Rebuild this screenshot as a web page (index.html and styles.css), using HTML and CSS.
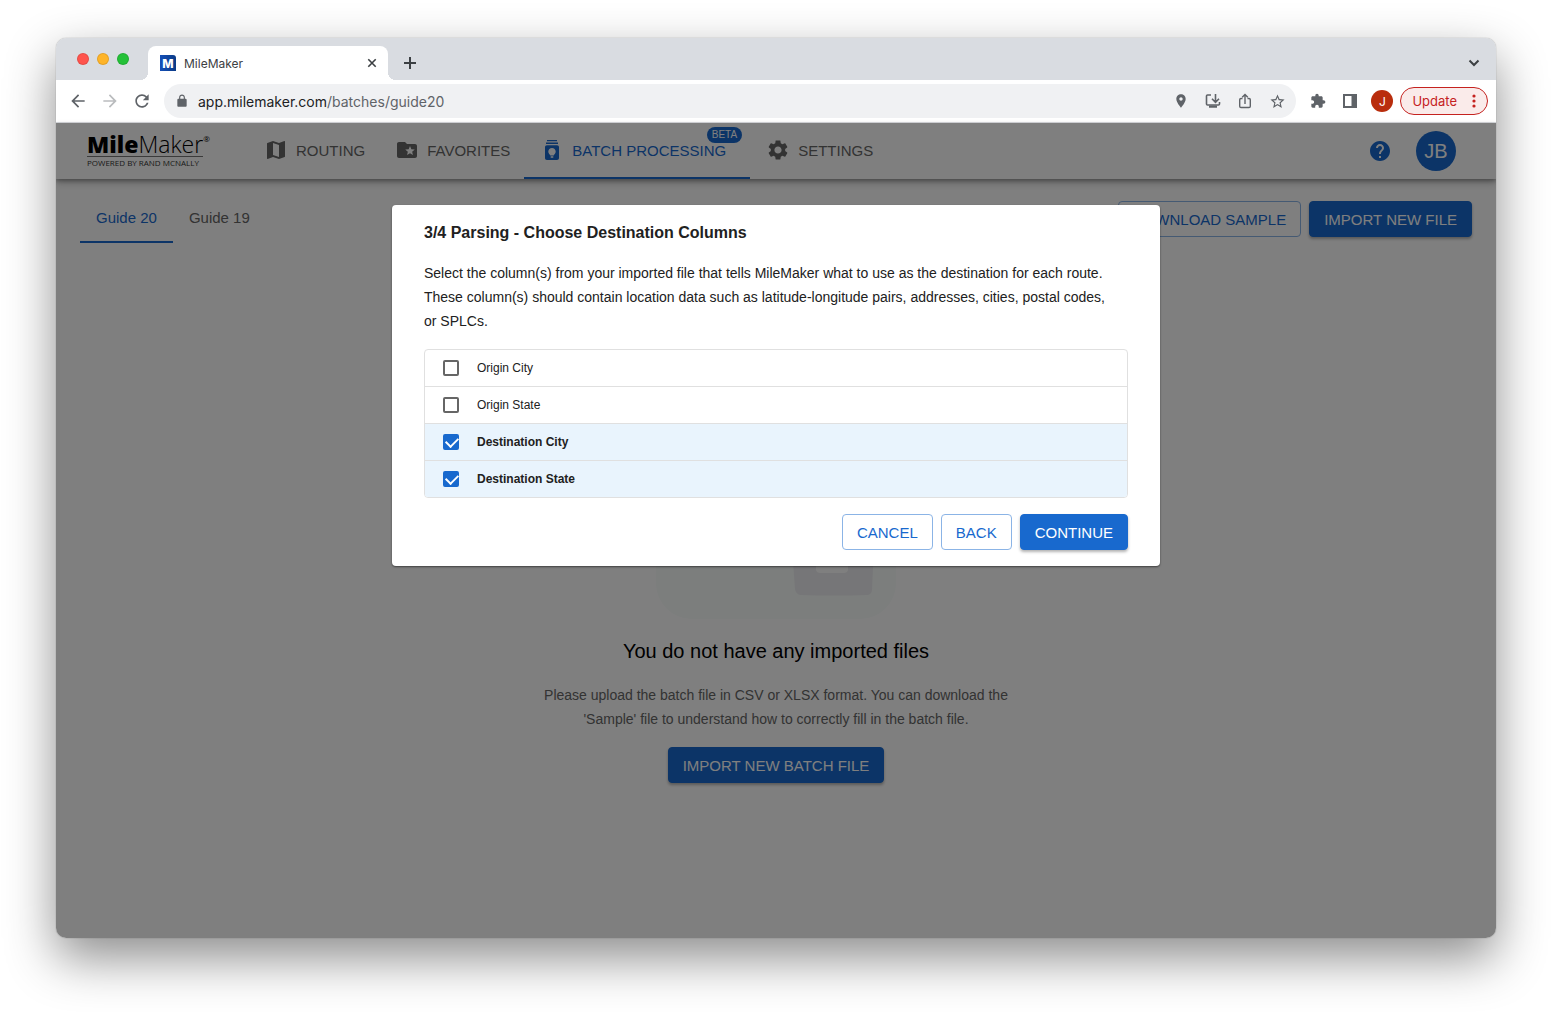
FILE: index.html
```html
<!DOCTYPE html>
<html lang="en">
<head>
<meta charset="UTF-8">
<meta name="viewport" content="width=device-width, initial-scale=1.0">
<title>MileMaker</title>
<link rel="stylesheet" href="styles.css">
</head>
<body>
  <div class="window">
    <!-- Browser tabs -->
    <div class="tab-strip">
      <div class="lights">
        <span class="light red"></span>
        <span class="light yellow"></span>
        <span class="light green"></span>
      </div>
      <div class="browser-tab">
        <span class="favicon">M</span>
        <span class="tab-title">MileMaker</span>
        <button class="icon-button" aria-label="Close tab">
          <svg width="16" height="16" viewBox="0 0 16 16" fill="none" stroke="#3c4043" stroke-width="1.6"><path d="M4.300 4.300l7.400 7.400M11.700 4.300l-7.400 7.400"/></svg>
        </button>
      </div>
      <button class="icon-button new-tab" aria-label="New tab">
        <svg width="16" height="16" viewBox="0 0 16 16" fill="none" stroke="#3c4043" stroke-width="2"><path d="M8 2v12M2 8h12"/></svg>
      </button>
      <button class="icon-button tab-search" aria-label="Search tabs">
        <svg width="16" height="16" viewBox="0 0 16 16" fill="none" stroke="#3c4043" stroke-width="2"><path d="M3.500 5.500L8 10l4.500-4.500"/></svg>
      </button>
    </div>

    <!-- Address bar -->
    <div class="toolbar">
      <button class="icon-button" aria-label="Back">
        <svg width="20" height="20" viewBox="0 0 24 24" fill="#5f6368"><path d="M20 11H7.830l5.590-5.590L12 4l-8 8 8 8 1.410-1.410L7.830 13H20v-2z"/></svg>
      </button>
      <button class="icon-button" aria-label="Forward">
        <svg width="20" height="20" viewBox="0 0 24 24" fill="#babcbe"><path d="M12 4l-1.410 1.410L16.170 11H4v2h12.170l-5.580 5.590L12 20l8-8z"/></svg>
      </button>
      <button class="icon-button" aria-label="Reload">
        <svg width="20" height="20" viewBox="0 0 24 24" fill="#5f6368"><path d="M17.650 6.350C16.200 4.900 14.210 4 12 4c-4.420 0-7.990 3.580-7.990 8s3.570 8 7.990 8c3.730 0 6.840-2.550 7.730-6h-2.080c-.82 2.330-3.040 4-5.650 4-3.310 0-6-2.690-6-6s2.690-6 6-6c1.660 0 3.140.69 4.220 1.780L13 11h7V4l-2.350 2.350z"/></svg>
      </button>
      <div class="omnibox">
        <svg width="14" height="14" viewBox="0 0 24 24" fill="#5f6368"><path d="M18 8h-1V6c0-2.760-2.240-5-5-5S7 3.240 7 6v2H6c-1.100 0-2 .9-2 2v10c0 1.100.9 2 2 2h12c1.100 0 2-.9 2-2V10c0-1.100-.9-2-2-2zM9 6c0-1.660 1.340-3 3-3s3 1.340 3 3v2H9V6z"/></svg>
        <span class="url">app.milemaker.com<span class="url-path">/batches/guide20</span></span>
        <svg width="16" height="16" viewBox="0 0 24 24" fill="#5f6368"><path d="M12 2C8.130 2 5 5.130 5 9c0 5.250 7 13 7 13s7-7.750 7-13c0-3.870-3.130-7-7-7zm0 9.500c-1.380 0-2.500-1.120-2.500-2.500s1.120-2.500 2.500-2.500 2.500 1.120 2.500 2.500-1.120 2.500-2.500 2.500z"/></svg>
        <svg width="16" height="16" viewBox="0 0 16 16" fill="none" stroke="#5f6368" stroke-width="1.600"><path d="M6 2H2.500C1.800 2 1.500 2.300 1.500 3v8c0 .7.300 1 1 1h11c.7 0 1-.3 1-1V9M10.500 1v8M7 5.800l3.500 3.500L14 5.800"/><path d="M4 13.600h8" stroke-width="2.400"/></svg>
        <svg width="16" height="16" viewBox="0 0 16 16" fill="none" stroke="#5f6368" stroke-width="1.400"><path d="M5.500 5.500H4c-.9 0-1.300.4-1.300 1.300v6.400c0 .9.400 1.300 1.300 1.300h8c.9 0 1.300-.4 1.300-1.300V6.800c0-.9-.4-1.300-1.300-1.300h-1.500M8 11V2M5.200 4.300L8 1.500l2.800 2.800"/></svg>
        <svg width="17" height="17" viewBox="0 0 24 24" fill="#5f6368"><path d="M22 9.240l-7.190-.62L12 2 9.190 8.630 2 9.240l5.460 4.730L5.820 21 12 17.270 18.180 21l-1.630-7.030L22 9.240zM12 15.400l-3.760 2.270 1-4.280-3.320-2.880 4.380-.38L12 6.100l1.710 4.040 4.380.38-3.320 2.880 1 4.280L12 15.400z"/></svg>
      </div>
      <button class="icon-button" aria-label="Extensions">
        <svg width="16" height="16" viewBox="0 0 24 24" fill="#5f6368"><path d="M20.500 11H19V7c0-1.100-.9-2-2-2h-4V3.500C13 2.120 11.880 1 10.500 1S8 2.120 8 3.500V5H4c-1.100 0-1.990.9-1.990 2v3.800H3.500c1.490 0 2.700 1.210 2.700 2.700s-1.210 2.700-2.700 2.700H2V20c0 1.100.9 2 2 2h3.800v-1.500c0-1.490 1.210-2.700 2.700-2.700 1.490 0 2.700 1.210 2.700 2.700V22H17c1.100 0 2-.9 2-2v-4h1.500c1.380 0 2.500-1.120 2.500-2.500S21.880 11 20.500 11z"/></svg>
      </button>
      <button class="icon-button" aria-label="Side panel">
        <svg width="16" height="16" viewBox="0 0 16 16" fill="#5f6368"><path d="M1 1h14v14H1zM3 3v10h6.500V3z" fill-rule="evenodd"/></svg>
      </button>
      <button class="profile" aria-label="Profile">J</button>
      <button class="update">Update
        <svg width="4" height="16" viewBox="0 0 4 16" fill="#c5221f"><circle cx="2" cy="3" r="1.600"/><circle cx="2" cy="8" r="1.600"/><circle cx="2" cy="13" r="1.600"/></svg>
      </button>
    </div>

    <div class="app">
      <header class="app-bar">
        <a class="logo" href="#">
          <span class="logo-name"><b>Mile</b>Maker<sup>®</sup></span>
          <span class="logo-sub">POWERED BY RAND MCNALLY</span>
        </a>
        <nav class="nav">
          <a class="nav-link" href="#">
            <svg width="24" height="24" viewBox="0 0 24 24"><path d="M20.500 3l-.16.03L15 5.100 9 3 3.360 4.900c-.21.07-.36.25-.36.48V20.500c0 .28.220.5.500.5l.16-.03L9 18.900l6 2.100 5.640-1.900c.21-.07.360-.25.360-.48V3.500c0-.28-.22-.5-.5-.5zM15 19l-6-2.110V5l6 2.110V19z"/></svg>
            ROUTING
          </a>
          <a class="nav-link" href="#">
            <svg width="24" height="24" viewBox="0 0 24 24"><path d="M20 6h-8l-2-2H4c-1.100 0-1.990.9-1.990 2L2 18c0 1.100.9 2 2 2h16c1.100 0 2-.9 2-2V8c0-1.100-.9-2-2-2zm-2.060 11L15 15.280 12.060 17l.78-3.330-2.590-2.240 3.410-.29L15 8l1.340 3.140 3.410.29-2.590 2.240.78 3.330z"/></svg>
            FAVORITES
          </a>
          <a class="nav-link active" href="#">
            <svg width="24" height="24" viewBox="0 0 24 24"><path d="M7 2h10v1.300H7zM6 4.600h12v1.300H6zM7 7.200h10c1.300 0 2 .8 2 2v10.800c0 1.300-.8 2-2 2H7c-1.300 0-2-.7-2-2V9.200c0-1.200.7-2 2-2zM12 10c-2.100 0-3.700 1.600-3.700 3.600 0 1.800 1.300 2.900 2 3.900h3.400c.7-1 2-2.100 2-3.900 0-2-1.600-3.600-3.700-3.600zM10.700 18.300v1.500h2.600v-1.500z" fill-rule="evenodd"/></svg>
            BATCH PROCESSING
            <span class="badge">BETA</span>
          </a>
          <a class="nav-link" href="#">
            <svg width="24" height="24" viewBox="0 0 24 24"><path d="M19.140 12.940c.04-.3.060-.61.060-.94 0-.32-.02-.64-.07-.94l2.030-1.580c.18-.14.230-.41.120-.61l-1.920-3.320c-.12-.22-.37-.29-.59-.22l-2.390.96c-.5-.38-1.030-.7-1.620-.94l-.36-2.540c-.04-.24-.24-.41-.48-.41h-3.840c-.24 0-.43.17-.47.410l-.36 2.540c-.59.24-1.130.57-1.620.94l-2.390-.96c-.22-.08-.47 0-.59.22L2.740 8.870c-.12.21-.08.47.12.61l2.030 1.580c-.05.3-.09.63-.09.94s.02.64.07.94l-2.030 1.580c-.18.14-.23.41-.12.61l1.920 3.320c.12.22.37.29.59.22l2.390-.96c.5.38 1.030.7 1.620.94l.36 2.540c.05.24.24.41.48.41h3.840c.24 0 .44-.17.47-.41l.36-2.540c.59-.24 1.130-.56 1.620-.94l2.390.96c.22.08.47 0 .59-.22l1.920-3.320c.12-.22.07-.47-.12-.61l-2.010-1.580zM12 15.600c-1.980 0-3.600-1.620-3.600-3.600s1.620-3.600 3.600-3.600 3.600 1.620 3.600 3.600-1.620 3.600-3.600 3.600z"/></svg>
            SETTINGS
          </a>
        </nav>
        <button class="icon-button help" aria-label="Help">
          <svg width="24" height="24" viewBox="0 0 24 24"><path d="M12 2C6.480 2 2 6.480 2 12s4.480 10 10 10 10-4.480 10-10S17.520 2 12 2zm1 17h-2v-2h2v2zm2.070-7.750l-.9.92C13.450 12.900 13 13.500 13 15h-2v-.5c0-1.100.45-2.100 1.170-2.830l1.240-1.260c.37-.36.59-.86.59-1.410 0-1.100-.9-2-2-2s-2 .9-2 2H8c0-2.210 1.790-4 4-4s4 1.790 4 4c0 .88-.36 1.680-.93 2.250z"/></svg>
        </button>
        <button class="avatar" aria-label="Account">JB</button>
      </header>

      <div class="page-head">
        <a class="guide-tab active" href="#">Guide 20</a>
        <a class="guide-tab" href="#">Guide 19</a>
        <div class="page-actions">
          <button class="btn outlined">DOWNLOAD SAMPLE</button>
          <button class="btn filled">IMPORT NEW FILE</button>
        </div>
      </div>

      <main class="empty">
        <svg width="240" height="200" viewBox="0 0 240 200">
          <rect width="240" height="200" rx="36" fill="#f8fcfa"/>
          <path d="M130 40h92l-6 130c0 4-2 6-6 6q-32 1-64 0c-4 0-6-2-7-6z" fill="#ececf0"/>
          <path d="M160 120h32v30c0 3-2 4-5 4h-22c-3 0-5-1-5-4z" fill="#fff"/>
        </svg>
        <h2>You do not have any imported files</h2>
        <p>Please upload the batch file in CSV or XLSX format. You can download the 'Sample' file to understand how to correctly fill in the batch file.</p>
        <button class="btn filled">IMPORT NEW BATCH FILE</button>
      </main>

      <!-- Import dialog -->
      <div class="overlay">
        <div class="dialog" role="dialog" aria-labelledby="dialog-title">
          <h1 id="dialog-title">3/4 Parsing - Choose Destination Columns</h1>
          <p>Select the column(s) from your imported file that tells MileMaker what to use as the destination for each route. These column(s) should contain location data such as latitude-longitude pairs, addresses, cities, postal codes, or SPLCs.</p>
          <div class="columns">
            <label class="column"><input type="checkbox">Origin City</label>
            <label class="column"><input type="checkbox">Origin State</label>
            <label class="column"><input type="checkbox" checked>Destination City</label>
            <label class="column"><input type="checkbox" checked>Destination State</label>
          </div>
          <div class="dialog-actions">
            <button class="btn outlined">CANCEL</button>
            <button class="btn outlined">BACK</button>
            <button class="btn filled">CONTINUE</button>
          </div>
        </div>
      </div>
    </div>
  </div>
</body>
</html>
```
FILE: styles.css
```css
* {
  box-sizing: border-box;
}
body {
  margin: 0;
  padding: 38px 56px 74px;
  min-height: 100vh;
  display: flex;
  background: #fff;
  color: #212121;
  font-family: "Liberation Sans", Arial, sans-serif;
  font-size: 14px;
}
button {
  font-family: inherit;
  cursor: pointer;
}
a {
  color: inherit;
  text-decoration: none;
}
svg {
  flex: none;
  display: block;
}
h1, h2, p {
  margin: 0;
}
.window {
  flex: 1;
  min-width: 0;
  display: flex;
  flex-direction: column;
  border-radius: 10px;
  overflow: hidden;
  box-shadow: 0 0 1px rgba(0, 0, 0, 0.5), 0 20px 50px rgba(0, 0, 0, 0.45);
}
.icon-button {
  display: flex;
  padding: 0;
  border: 0;
  background: none;
}

/* Browser chrome */
.tab-strip {
  display: flex;
  align-items: center;
  height: 42px;
  padding: 8px 14px 0 21px;
  background: #d9dce1;
  font-family: Inter, sans-serif;
}
.lights {
  display: flex;
  gap: 8px;
  padding-bottom: 8px;
}
.light {
  width: 12px;
  height: 12px;
  border-radius: 50%;
  border: 1px solid rgba(0, 0, 0, 0.1);
}
.red {
  background: #ff544d;
}
.yellow {
  background: #feb429;
}
.green {
  background: #24c138;
}
.browser-tab {
  position: relative;
  display: flex;
  align-items: center;
  gap: 8px;
  width: 240px;
  height: 34px;
  margin-left: 19px;
  padding: 0 8px 0 12px;
  border-radius: 8px 8px 0 0;
  background: #fff;
}
/* curved feet of the tab */
.browser-tab::before,
.browser-tab::after {
  content: "";
  position: absolute;
  bottom: 0;
  width: 8px;
  height: 8px;
}
.browser-tab::before {
  left: -8px;
  background: radial-gradient(circle at 0 0, #d9dce1 8px, #fff 8px);
}
.browser-tab::after {
  right: -8px;
  background: radial-gradient(circle at 100% 0, #d9dce1 8px, #fff 8px);
}
.favicon {
  width: 16px;
  height: 16px;
  border-radius: 0 3px 0 0;
  background: linear-gradient(90deg, #1450b8, #0b3a86);
  color: #fff;
  font-size: 12px;
  font-weight: 800;
  line-height: 17px;
  text-align: center;
}
.tab-title {
  flex: 1;
  font-size: 12px;
  color: #3c4043;
}
.new-tab {
  margin-left: 14px;
}
.tab-search {
  margin-left: auto;
}
.toolbar {
  display: flex;
  align-items: center;
  gap: 12px;
  height: 43px;
  padding: 0 8px 0 12px;
  background: #fff;
  border-bottom: 1px solid #dadce0;
  font-family: Inter, sans-serif;
}
.omnibox {
  flex: 1;
  display: flex;
  align-items: center;
  gap: 16px;
  height: 34px;
  padding: 0 10px 0 11px;
  border-radius: 17px;
  background: #f0f1f3;
}
.url {
  flex: 1;
  margin-left: -7px;
  font-size: 14px;
  color: #202124;
}
.url-path {
  color: #5f6368;
}
.omnibox + .icon-button {
  margin-left: 2px;
}
.omnibox ~ .icon-button + .icon-button {
  margin-left: 4px;
}
.profile {
  width: 22px;
  height: 22px;
  margin-left: 1px;
  padding: 0;
  border: 0;
  border-radius: 50%;
  background: #b92d0d;
  color: #fff;
  font-size: 12px;
}
.update {
  display: flex;
  align-items: center;
  gap: 15px;
  height: 28px;
  margin-left: -5px;
  padding: 0 11px;
  border: 1px solid #c5221f;
  border-radius: 14px;
  background: #faebea;
  color: #c5221f;
  font-size: 13px;
}

/* App */
.app {
  position: relative;
  flex: 1;
  background: #fff;
}
.app-bar {
  display: flex;
  align-items: center;
  height: 56px;
  padding: 0 40px 0 31px;
  box-shadow: 0 2px 4px rgba(0, 0, 0, 0.3), 0 4px 8px rgba(0, 0, 0, 0.2);
}
.logo {
  display: flex;
  flex-direction: column;
  width: 161px;
  color: #000;
  font-family: "Open Sans", sans-serif;
}
.logo-name {
  align-self: flex-start;
  border-bottom: 1px solid #777;
  font-size: 23px;
  font-weight: 300;
  line-height: 23px;
}
.logo-name b {
  font-weight: 800;
}
.logo-name sup {
  position: absolute;
  font-size: 8px;
  font-weight: 400;
  line-height: 12px;
}
.logo-sub {
  font-size: 8px;
  line-height: 12px;
  color: #333;
}
.nav {
  flex: 1;
  display: flex;
  align-self: stretch;
}
.nav-link {
  position: relative;
  display: flex;
  align-items: center;
  gap: 8px;
  padding: 0 14px 0 16px;
  border-bottom: 2px solid transparent;
  color: #666;
  fill: #666;
  font-size: 15px;
  white-space: nowrap;
}
.nav-link.active {
  padding-right: 24px;
  border-color: #1869ce;
  color: #1869ce;
  fill: #1869ce;
}
.badge {
  position: absolute;
  top: 4px;
  right: 8px;
  padding: 0 5px;
  border-radius: 8px;
  background: #1869ce;
  color: #fff;
  font-size: 10px;
  line-height: 16px;
}
.help {
  fill: #1869ce;
}
.avatar {
  width: 40px;
  height: 40px;
  margin-left: 24px;
  padding: 0;
  border: 0;
  border-radius: 50%;
  background: #1869ce;
  color: #fff;
  font-size: 20px;
}
.page-head {
  display: flex;
  align-items: center;
  padding: 16px 24px 0;
}
.guide-tab {
  height: 48px;
  padding: 0 16px;
  border-bottom: 2px solid transparent;
  color: #666;
  font-size: 15px;
  line-height: 46px;
}
.guide-tab.active {
  border-color: #1869ce;
  color: #1869ce;
}
.page-actions {
  display: flex;
  gap: 8px;
  margin-left: auto;
}
.btn {
  height: 36px;
  padding: 0 14px;
  border: 1px solid #1869ce;
  border-radius: 4px;
  font-size: 15px;
}
.outlined {
  border-color: #8bb4e6;
  background: #fff;
  color: #1869ce;
}
.filled {
  background: #1869ce;
  color: #fff;
  box-shadow: 0 2px 3px rgba(0, 0, 0, 0.3);
}
.empty {
  display: flex;
  flex-direction: column;
  align-items: center;
  gap: 16px;
  padding: 176px 24px 0;
}
.empty h2 {
  color: #000;
  font-size: 20px;
  font-weight: 400;
  line-height: 32px;
}
.empty p {
  max-width: 480px;
  color: #666;
  line-height: 24px;
  text-align: center;
}

/* Dialog */
.overlay {
  position: absolute;
  inset: 0;
  padding: 82px 24px 24px;
  background: rgba(0, 0, 0, 0.5);
}
.dialog {
  max-width: 768px;
  margin: 0 auto;
  padding: 16px 32px;
  border-radius: 4px;
  background: #fff;
  box-shadow: 0 1px 2px rgba(0, 0, 0, 0.5);
}
.dialog h1 {
  margin-bottom: 16px;
  font-size: 16px;
  line-height: 24px;
}
.dialog p {
  padding-right: 8px;
  line-height: 24px;
}
.columns {
  margin: 16px 0;
  border: 1px solid #e0e0e0;
  border-radius: 4px;
  overflow: hidden;
}
.column {
  display: flex;
  align-items: center;
  gap: 18px;
  height: 36px;
  padding: 0 18px;
  font-size: 12px;
}
.column + .column {
  height: 37px;
  border-top: 1px solid #e0e0e0;
}
.column:has(input:checked) {
  background: #e9f4fd;
  font-weight: bold;
}
.column input {
  appearance: none;
  position: relative;
  width: 16px;
  height: 16px;
  margin: 0;
  border: 2px solid #666;
  border-radius: 2px;
}
.column input:checked {
  border-color: #1869ce;
  background: #1869ce;
}
.column input:checked::after {
  content: "";
  position: absolute;
  top: -1px;
  left: 3px;
  width: 6px;
  height: 10px;
  border: solid #fff;
  border-width: 0 2px 2px 0;
  transform: rotate(45deg);
}
.dialog-actions {
  display: flex;
  justify-content: flex-end;
  gap: 8px;
}
```
